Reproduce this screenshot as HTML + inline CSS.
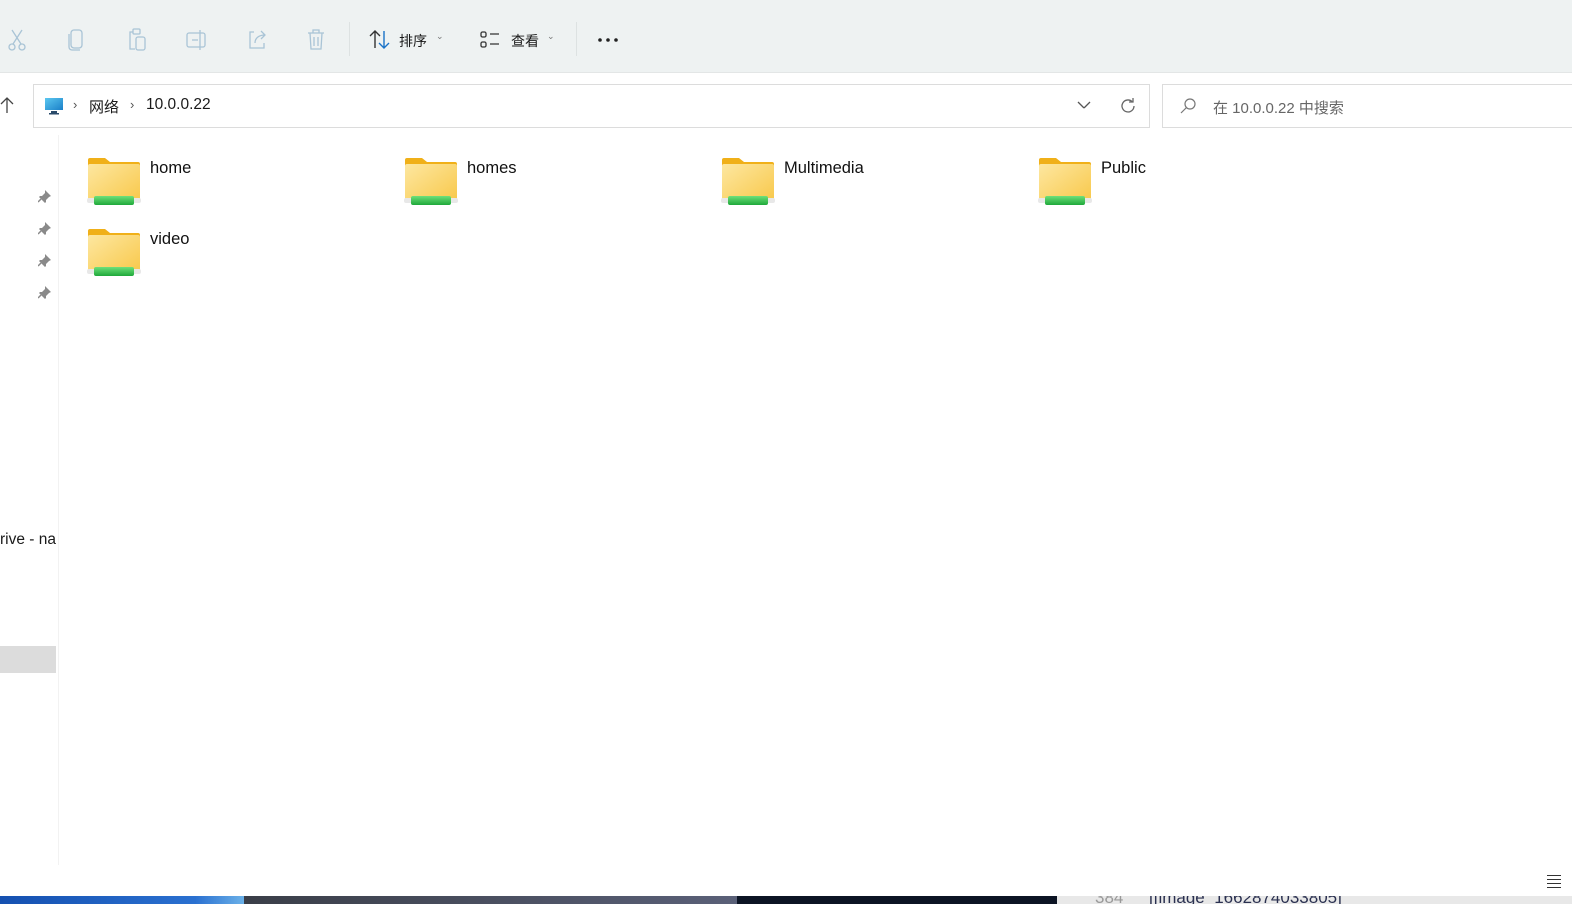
<!DOCTYPE html>
<html><head><meta charset="utf-8"><style>
*{margin:0;padding:0;box-sizing:border-box}
body{width:1572px;height:904px;overflow:hidden;background:#fff;font-family:"Liberation Sans","Noto Sans CJK SC",sans-serif;position:relative;color:#1a1a1a}
.tb{position:absolute;left:0;top:0;width:1572px;height:73px;background:#eef2f2;border-bottom:1px solid #e3e6e6}
.ic{position:absolute;top:28px}
.t{position:absolute;font-size:14px}
.addr{position:absolute;left:33px;top:84px;width:1117px;height:44px;border:1px solid #dcdcdc;background:#fff}
.srch{position:absolute;left:1162px;top:84px;width:420px;height:44px;border:1px solid #dcdcdc;background:#fff}
.f{position:absolute;width:54px;height:50px}
.fl{position:absolute;font-size:16.5px;color:#111}
</style></head><body>
<div class="tb">
<svg class="ic" style="left:6px" width="22" height="24" viewBox="0 0 22 24" fill="none" stroke="#a9c4d6" stroke-width="1.3"><path d="M6 2l9 14M16 2L7 16"/><circle cx="6" cy="19" r="3"/><circle cx="16" cy="19" r="3"/></svg>
<svg class="ic" style="left:67px" width="20" height="24" viewBox="0 0 20 24" fill="none" stroke="#a9c4d6" stroke-width="1.3"><rect x="4" y="2" width="11" height="18" rx="3"/><path d="M2 6v13a3 3 0 003 3h8"/></svg>
<svg class="ic" style="left:126px" width="22" height="24" viewBox="0 0 22 24" fill="none" stroke="#a9c4d6" stroke-width="1.3"><path d="M7 4H4v17h5"/><rect x="7" y="1" width="7" height="5" rx="1"/><rect x="10" y="9" width="9" height="13" rx="2"/></svg>
<svg class="ic" style="left:185px" width="24" height="24" viewBox="0 0 24 24" fill="none" stroke="#a9c4d6" stroke-width="1.3"><rect x="2" y="5" width="18" height="14" rx="2"/><path d="M7 12h6M15 2v20"/></svg>
<svg class="ic" style="left:246px" width="22" height="24" viewBox="0 0 22 24" fill="none" stroke="#a9c4d6" stroke-width="1.3"><path d="M8 4H4v16h14v-5"/><path d="M9 15c0-5 4-8 10-8M15 3l4 4-4 4"/></svg>
<svg class="ic" style="left:306px" width="20" height="24" viewBox="0 0 20 24" fill="none" stroke="#a9c4d6" stroke-width="1.3"><path d="M2 5h16M7 5V2h6v3M4 5l1 16h10l1-16M8 9v9M12 9v9"/></svg>
<div style="position:absolute;left:349px;top:22px;width:1px;height:34px;background:#dde2e2"></div>
<svg class="ic" style="left:368px" width="24" height="24" viewBox="0 0 24 24" fill="none" stroke-width="1.4"><path d="M7 20V3M2 8l5-5 5 5" stroke="#333"/><path d="M16 3v17M11 15l5 5 5-5" stroke="#1a73c8"/></svg>
<span class="t" style="left:399px;top:31px">排序</span><span class="t" style="left:436px;top:31px;font-size:9px;color:#777">⌄</span>
<svg class="ic" style="left:479px" width="24" height="24" viewBox="0 0 24 24" fill="none" stroke="#333" stroke-width="1.3"><rect x="2" y="4" width="5" height="5" rx="1.5"/><rect x="2" y="14" width="5" height="5" rx="1.5"/><path d="M11 6h9M11 16h9"/></svg>
<span class="t" style="left:511px;top:31px">查看</span><span class="t" style="left:547px;top:31px;font-size:9px;color:#777">⌄</span>
<div style="position:absolute;left:576px;top:22px;width:1px;height:34px;background:#dde2e2"></div>
<svg style="position:absolute;left:597px;top:37px" width="22" height="6" viewBox="0 0 22 6" fill="#222"><circle cx="3" cy="3" r="1.8"/><circle cx="11" cy="3" r="1.8"/><circle cx="19" cy="3" r="1.8"/></svg>
</div>
<svg style="position:absolute;left:0;top:96px" width="16" height="18" viewBox="0 0 16 18" fill="none" stroke="#444" stroke-width="1.3"><path d="M7 17V2M1 8l6-6 6 6"/></svg>
<div class="addr">
<svg style="position:absolute;left:10px;top:11px" width="20" height="20" viewBox="0 0 20 20"><defs><linearGradient id="m" x1="0" y1="0" x2="1" y2="1"><stop offset="0" stop-color="#5cc8f0"/><stop offset="1" stop-color="#1a7fc8"/></linearGradient></defs><rect x="1" y="2" width="18" height="12" fill="url(#m)"/><rect x="7" y="15" width="6" height="2" fill="#2a4a6a"/><rect x="5" y="17" width="10" height="1.5" fill="#2a4a6a"/></svg>
<span style="position:absolute;left:39px;top:12px;font-size:13px;color:#555">›</span>
<span style="position:absolute;left:55px;top:11px;font-size:15px">网络</span>
<span style="position:absolute;left:96px;top:12px;font-size:13px;color:#555">›</span>
<span style="position:absolute;left:112px;top:11px;font-size:15.5px">10.0.0.22</span>
<svg style="position:absolute;left:1043px;top:15px" width="14" height="10" viewBox="0 0 14 10" fill="none" stroke="#555" stroke-width="1.3"><path d="M1 2l6 6-6-6M7 8l6-6"/></svg>
<svg style="position:absolute;left:1084px;top:11px" width="20" height="20" viewBox="0 0 20 20" fill="none" stroke="#666" stroke-width="1.3"><path d="M16 10a6 6 0 11-2-4.5M15 2v4h-4"/></svg>
</div>
<div class="srch">
<svg style="position:absolute;left:16px;top:12px" width="18" height="18" viewBox="0 0 18 18" fill="none" stroke="#777" stroke-width="1.2"><circle cx="11" cy="7" r="5"/><path d="M7.5 10.5L2 16"/></svg>
<span style="position:absolute;left:50px;top:12px;font-size:15px;color:#666">在 10.0.0.22 中搜索</span>
</div>
<div style="position:absolute;left:58px;top:135px;width:1px;height:730px;background:#f2f2f2"></div>
<svg style="position:absolute;left:38px;top:189px" width="14" height="112" viewBox="0 0 14 112" fill="#8a8a8a"><g id="p"><path d="M7 1l6 6-2 1-3 3 0 2-1 1-6-6 1-1h2l3-3z"/><path d="M3 10l-3 3" stroke="#8a8a8a" stroke-width="1.5"/></g><use href="#p" y="32"/><use href="#p" y="64"/><use href="#p" y="96"/></svg>
<span style="position:absolute;left:0;top:531px;font-size:15.5px">rive - na</span>
<div style="position:absolute;left:0;top:646px;width:56px;height:27px;background:#dcdcdc"></div>
<svg width="0" height="0" style="position:absolute"><defs><linearGradient id="fg" x1="0" y1="0" x2="1" y2="1"><stop offset="0" stop-color="#fde7a0"/><stop offset="1" stop-color="#f8c84a"/></linearGradient><linearGradient id="gg" x1="0" y1="0" x2="0" y2="1"><stop offset="0" stop-color="#6ee07a"/><stop offset="1" stop-color="#1fa83a"/></linearGradient><g id="fo"><path d="M1 3a2 2 0 012-2h15l5 4h28a2 2 0 012 2v3H1z" fill="#f0b019"/><rect x="1" y="7" width="52" height="38" rx="2" fill="url(#fg)"/><rect x="0" y="41" width="54" height="5" rx="2" fill="#e8e8e8"/><rect x="7" y="39" width="40" height="9" rx="2" fill="url(#gg)"/></g></defs></svg>
<svg class="f" style="left:87px;top:157px" viewBox="0 0 54 50"><use href="#fo"/></svg>
<svg class="f" style="left:404px;top:157px" viewBox="0 0 54 50"><use href="#fo"/></svg>
<svg class="f" style="left:721px;top:157px" viewBox="0 0 54 50"><use href="#fo"/></svg>
<svg class="f" style="left:1038px;top:157px" viewBox="0 0 54 50"><use href="#fo"/></svg>
<svg class="f" style="left:87px;top:228px" viewBox="0 0 54 50"><use href="#fo"/></svg>
<span class="fl" style="left:150px;top:159px">home</span>
<span class="fl" style="left:467px;top:159px">homes</span>
<span class="fl" style="left:784px;top:159px">Multimedia</span>
<span class="fl" style="left:1101px;top:159px">Public</span>
<span class="fl" style="left:150px;top:230px">video</span>
<svg style="position:absolute;left:1546px;top:873px" width="16" height="16" viewBox="0 0 16 16" stroke="#333" stroke-width="1"><path d="M1 2.5h14M1 6.5h14M1 10.5h14M1 14.5h14"/></svg>
<div style="position:absolute;left:0;top:896px;width:244px;height:8px;background:linear-gradient(90deg,#1550b0,#2a70d0 80%,#6ab0e8)"></div>
<div style="position:absolute;left:244px;top:896px;width:493px;height:8px;background:linear-gradient(90deg,#3a3e48,#5a6078)"></div>
<div style="position:absolute;left:737px;top:896px;width:320px;height:8px;background:#0c1424"></div>
<div style="position:absolute;left:1057px;top:896px;width:515px;height:8px;background:#e8e8e8;overflow:hidden"><span style="position:absolute;left:38px;top:-8px;font-size:17px;color:#999">384</span><span style="position:absolute;left:92px;top:-8px;font-size:17px;color:#2a3050">[[image_1662874033805]</span></div>
</body></html>
